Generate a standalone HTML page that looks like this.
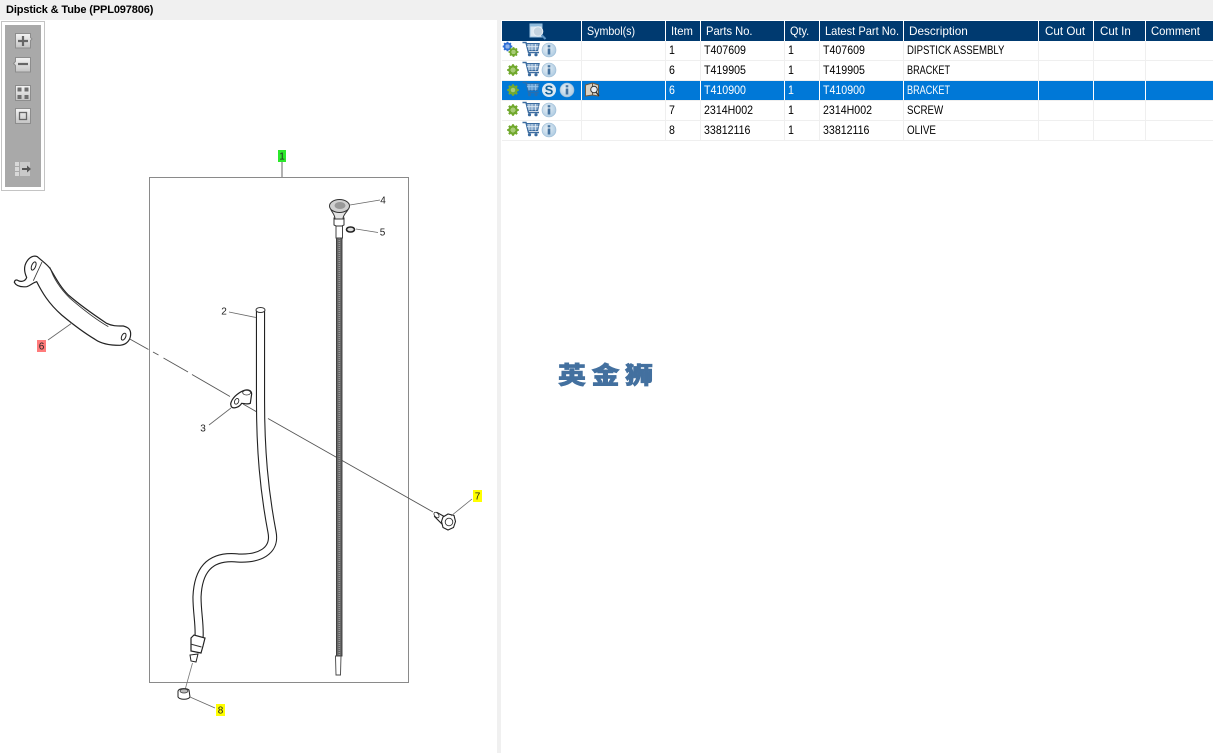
<!DOCTYPE html>
<html><head><meta charset="utf-8"><style>
html,body{margin:0;padding:0;background:#fff;width:1213px;height:753px;overflow:hidden}
body{font-family:"Liberation Sans","Noto Sans CJK SC",sans-serif;position:relative}
#top{position:absolute;left:0;top:0;width:1213px;height:20px;background:#f0f0f0}
#title{position:absolute;left:6px;top:3px;font-size:11px;line-height:14px;font-weight:bold;color:#000;white-space:nowrap;letter-spacing:-.13px}
#div{position:absolute;left:497px;top:20px;width:4px;height:733px;background:#f0f0f0}
#tb{position:absolute;left:1px;top:21px;width:36px;height:162px;border:4px solid #fff;outline:1px solid #c4c4c4;outline-offset:-1px;background:#a9a9a9}
#hd,.r{position:absolute;left:502px;width:711px}
#hd{top:21px;height:20px;background:#003a70}
.r{height:19px;border-bottom:1px solid #efefef}
.c{position:absolute;top:0;font-size:12px;white-space:nowrap;color:#000;line-height:19px;transform-origin:0 50%;transform:scaleX(.885)}
#hd .c{color:#fff;line-height:20px}
.sel{background:#0078d7}.sel .c{color:#fff}
#wm{position:absolute;left:558px;top:358px;font-size:28px;line-height:36px;font-weight:900;letter-spacing:5.5px;color:#43709f;white-space:nowrap;-webkit-text-stroke:.7px #43709f;transform-origin:0 50%;transform:scaleY(.86)}
svg{position:absolute;left:0;top:0}
.t{font:10px "Liberation Sans",sans-serif;fill:#222}
</style></head><body>
<div id="top"></div><div id="title">Dipstick &amp; Tube (PPL097806)</div>
<div id="div"></div>
<div id="tb"></div>

<div id="hd">
<span class="c" style="left:85px;transform:scaleX(.89)">Symbol(s)</span><span class="c" style="left:169px;transform:scaleX(.94)">Item</span><span class="c" style="left:204px;transform:scaleX(.93)">Parts No.</span><span class="c" style="left:288px;transform:scaleX(.91)">Qty.</span><span class="c" style="left:323px;transform:scaleX(.925)">Latest Part No.</span><span class="c" style="left:407px;transform:scaleX(.98)">Description</span><span class="c" style="left:542.500px;transform:scaleX(.97)">Cut Out</span><span class="c" style="left:597.500px;transform:scaleX(.96)">Cut In</span><span class="c" style="left:649px;transform:scaleX(.94)">Comment</span>
</div>

<div class="r" style="top:41px"><span class="c" style="left:167px">1</span><span class="c" style="left:202px">T407609</span><span class="c" style="left:286px">1</span><span class="c" style="left:321px">T407609</span><span class="c" style="left:405px;transform:scaleX(.8)">DIPSTICK ASSEMBLY</span></div>
<div class="r" style="top:61px"><span class="c" style="left:167px">6</span><span class="c" style="left:202px">T419905</span><span class="c" style="left:286px">1</span><span class="c" style="left:321px">T419905</span><span class="c" style="left:405px;transform:scaleX(.76)">BRACKET</span></div>
<div class="r sel" style="top:81px"><span class="c" style="left:167px">6</span><span class="c" style="left:202px">T410900</span><span class="c" style="left:286px">1</span><span class="c" style="left:321px">T410900</span><span class="c" style="left:405px;transform:scaleX(.76)">BRACKET</span></div>
<div class="r" style="top:101px"><span class="c" style="left:167px">7</span><span class="c" style="left:202px">2314H002</span><span class="c" style="left:286px">1</span><span class="c" style="left:321px">2314H002</span><span class="c" style="left:405px;transform:scaleX(.81)">SCREW</span></div>
<div class="r" style="top:121px"><span class="c" style="left:167px">8</span><span class="c" style="left:202px">33812116</span><span class="c" style="left:286px">1</span><span class="c" style="left:321px">33812116</span><span class="c" style="left:405px;transform:scaleX(.82)">OLIVE</span></div>

<div id="wm">英金狮</div>

<svg width="1213" height="753" viewBox="0 0 1213 753" fill="none">
<defs>
<linearGradient id="btn" x1="0" y1="0" x2="0" y2="1"><stop offset="0" stop-color="#f4f4f4"/><stop offset="1" stop-color="#c4c4c4"/></linearGradient>
<radialGradient id="inf" cx=".4" cy=".4" r=".7"><stop offset="0" stop-color="#e6eff6"/><stop offset="1" stop-color="#a9c8e0"/></radialGradient>
<g id="gear"><circle r="3.500" fill="none" stroke="#72a92e" stroke-width="2.400"/><path d="M0-5.800V-3M0 3V5.800M-5.800 0H-3M3 0H5.800M-4.100-4.100L-2.200-2.200M2.200 2.200L4.100 4.100M-4.100 4.100L-2.200 2.200M2.200-2.200L4.100-4.100" stroke="#72a92e" stroke-width="2.100"/><circle r="2.300" fill="#a9cc76"/></g>
<g id="gearb"><circle r="3" fill="none" stroke="#2f6fd6" stroke-width="2"/><path d="M0-4.800V-2.500M0 2.500V4.800M-4.800 0H-2.500M2.500 0H4.800M-3.400-3.400L-1.800-1.800M1.800 1.800L3.400 3.400M-3.400 3.400L-1.800 1.800M1.800-1.800L3.400-3.400" stroke="#2f6fd6" stroke-width="1.700"/><circle r="2" fill="#8fb4ec"/></g>
<g id="cart"><path d="M-8.500-6.500h3.500l2.500 10h10.500" stroke="#3a6b9f" stroke-width="1.400"/><path d="M-4.800-5.500h13l-1.500 7h-9.800z" fill="#86a8cb" stroke="#3a6b9f"/><path d="M-2-5v6.500M1-5v6.500M4.500-5v6.500M-4-2.300h11.500" stroke="#e2ecf5" stroke-width=".8"/><circle cx="-1.500" cy="5.700" r="1.600" fill="#3a6b9f"/><circle cx="5" cy="5.700" r="1.600" fill="#3a6b9f"/></g>
<g id="info"><circle r="7" fill="url(#inf)" stroke="#9abad4" stroke-width=".6"/><rect x="-1.300" y="-1.500" width="2.600" height="6" fill="#44729f"/><rect x="-1.300" y="-4.800" width="2.600" height="2.200" fill="#44729f"/></g>
</defs>

<!-- column separators -->
<g fill="#fff">
<rect x="581" y="21" width="1" height="20"/><rect x="665" y="21" width="1" height="20"/><rect x="700" y="21" width="1" height="20"/><rect x="784" y="21" width="1" height="20"/><rect x="819" y="21" width="1" height="20"/><rect x="903" y="21" width="1" height="20"/><rect x="1038" y="21" width="1" height="20"/><rect x="1093" y="21" width="1" height="20"/><rect x="1145" y="21" width="1" height="20"/>
<rect x="581" y="81" width="1" height="19"/><rect x="665" y="81" width="1" height="19"/><rect x="700" y="81" width="1" height="19"/><rect x="784" y="81" width="1" height="19"/><rect x="819" y="81" width="1" height="19"/><rect x="903" y="81" width="1" height="19"/><rect x="1038" y="81" width="1" height="19"/><rect x="1093" y="81" width="1" height="19"/><rect x="1145" y="81" width="1" height="19"/>
</g>
<g fill="#efefef">
<rect x="581" y="41" width="1" height="39"/><rect x="665" y="41" width="1" height="39"/><rect x="700" y="41" width="1" height="39"/><rect x="784" y="41" width="1" height="39"/><rect x="819" y="41" width="1" height="39"/><rect x="903" y="41" width="1" height="39"/><rect x="1038" y="41" width="1" height="39"/><rect x="1093" y="41" width="1" height="39"/><rect x="1145" y="41" width="1" height="39"/>
<rect x="581" y="101" width="1" height="39"/><rect x="665" y="101" width="1" height="39"/><rect x="700" y="101" width="1" height="39"/><rect x="784" y="101" width="1" height="39"/><rect x="819" y="101" width="1" height="39"/><rect x="903" y="101" width="1" height="39"/><rect x="1038" y="101" width="1" height="39"/><rect x="1093" y="101" width="1" height="39"/><rect x="1145" y="101" width="1" height="39"/>
</g>

<!-- header icon -->
<rect x="530" y="24" width="12" height="13" fill="#dce8f2" stroke="#9cc3e0"/><rect x="530" y="24" width="12" height="2.500" fill="#8fbbdc"/>
<circle cx="538" cy="31.500" r="4.800" fill="#c4d3df" stroke="#e8eff5"/><path d="M541.500 35l4 4" stroke="#5f95c4" stroke-width="2"/>

<!-- row icons -->
<use href="#gearb" x="507.500" y="46.500"/>
<use href="#gear" transform="translate(513.500 52) scale(.85)"/>
<use href="#cart" x="531" y="49"/><use href="#info" x="549" y="50"/>
<use href="#gear" x="513" y="70"/>
<use href="#cart" x="531" y="69"/><use href="#info" x="549" y="70"/>
<use href="#gear" x="513" y="90"/>
<use href="#cart" x="531" y="89" opacity=".7"/>
<circle cx="549" cy="90" r="7" fill="#dbe8f2"/>
<text x="549" y="94.500" text-anchor="middle" font-family="Liberation Sans" font-weight="bold" font-size="13" fill="#0f5f98">S</text>
<use href="#info" x="567" y="90"/>
<use href="#gear" x="513" y="110"/>
<use href="#cart" x="531" y="109"/><use href="#info" x="549" y="110"/>
<use href="#gear" x="513" y="130"/>
<use href="#cart" x="531" y="129"/><use href="#info" x="549" y="130"/>
<!-- symbol icon -->
<path d="M585.500 85l7-2 6 2v11l-6-1-7 1z" fill="#d9d2c4" stroke="#6b5a44"/><path d="M592.500 83v12" stroke="#6b5a44"/>
<circle cx="594" cy="89.500" r="3.300" fill="#e8eef4" stroke="#333"/><path d="M596 92l3 4" stroke="#333" stroke-width="1.300"/>

<!-- toolbar buttons -->
<g stroke="#8d8d8d" fill="url(#btn)">
<path d="M15.500 33.500h15v4l1.500 1.500-1.500 1.500v7.500h-15z"/>
<path d="M30.500 57.500h-15v4l-2 2 2 2v6.500h15z"/>
<rect x="15.500" y="85.500" width="15" height="15"/>
<rect x="15.500" y="108.500" width="15" height="15"/>
</g>
<path d="M18 41h10M23 36v10" stroke="#666" stroke-width="2.200"/>
<path d="M18 64h10" stroke="#666" stroke-width="2.200"/>
<g fill="#6e6e6e"><rect x="17.500" y="87.500" width="4" height="4"/><rect x="24.500" y="87.500" width="4" height="4"/><rect x="17.500" y="95" width="4" height="4"/><rect x="24.500" y="95" width="4" height="4"/></g>
<rect x="19.500" y="112.500" width="7" height="7" stroke="#666" stroke-width="1.300"/>
<g fill="#d8d8d8"><rect x="15" y="162" width="4" height="4"/><rect x="15" y="167" width="4" height="4"/><rect x="15" y="172" width="4" height="4"/></g>
<rect x="20" y="162" width="10" height="14" fill="#c9c9c9"/>
<path d="M22 169h6" stroke="#555" stroke-width="2"/><path d="M27 165.500l4 3.500-4 3.500z" fill="#555"/>

<!-- drawing frame -->
<rect x="149.500" y="177.500" width="259" height="505" stroke="#8a8a8a"/>
<rect x="278" y="150" width="8" height="12" fill="#2be82b"/>
<text class="t" x="282" y="159.500" text-anchor="middle">1</text>
<path d="M282 162v15" stroke="#666"/>

<!-- axis dashed line -->
<path d="M128 338L148.500 349.500M153 352L158.500 355M163.500 358L188 372M192 374.500L230 396.500M243 404L263 415.500M268 418.500L433 512" stroke="#555" stroke-width=".9"/>

<!-- tube -->
<path d="M260.500 310V400C260.500 450 264 490 272 532C276 552 258 559 238 558C208 555 198 572 197 597C197 613 200 625 199 638" stroke="#222" stroke-width="9.200"/>
<path d="M260.500 310V400C260.500 450 264 490 272 532C276 552 258 559 238 558C208 555 198 572 197 597C197 613 200 625 199 638" stroke="#fff" stroke-width="7"/>
<ellipse cx="260.500" cy="310" rx="4.500" ry="2.500" fill="#fff" stroke="#333"/>
<!-- fitting -->
<path d="M191 638l3-3 11 3-2 8-2 7-10-2 0-7z" fill="#fff" stroke="#222" stroke-width="1.200"/>
<path d="M190.500 644l11 3" stroke="#333"/>
<path d="M190 655l1 6 5 1 2-8z" fill="#fff" stroke="#222"/>
<path d="M192.500 663L185 690" stroke="#777" stroke-width=".8"/>
<!-- olive 8 -->
<path d="M178 691c1-3 9-3 11-1l1 7c-2 3-10 3-12 0z" fill="#fff" stroke="#222"/><ellipse cx="184" cy="691" rx="4" ry="2" fill="#bbb" stroke="#333" stroke-width=".7"/>
<path d="M190 697L215 708" stroke="#666" stroke-width=".8"/>
<rect x="216" y="704" width="9" height="12" fill="#ff0"/>
<text class="t" x="220.500" y="713.500" text-anchor="middle">8</text>

<!-- dipstick -->
<rect x="336.500" y="238" width="5.500" height="418" fill="#666" stroke="#333" stroke-width=".9"/>
<path d="M339.300 238V656" stroke="#999" stroke-width="1.600" stroke-dasharray="1 1"/>
<path d="M335.500 656h5.500l-.5 19h-4.500z" fill="#fff" stroke="#444" stroke-width=".9"/>
<path d="M336 226h6.500v12h-6.500z" fill="#fff" stroke="#444"/>
<path d="M334 218h10v7l-2 1h-6l-2-1z" fill="#fff" stroke="#333"/>
<path d="M330 207c1 5 5 7 5 12h8c0-5 5-7 6-12z" fill="#e4e4e4" stroke="#333"/>
<ellipse cx="339.500" cy="206" rx="10" ry="6.500" fill="#d0d0d0" stroke="#333"/>
<ellipse cx="340" cy="205.500" rx="5.500" ry="3.500" fill="#999"/>
<path d="M350 205L380 200" stroke="#666" stroke-width=".8"/>
<text class="t" x="383" y="203.500" text-anchor="middle">4</text>
<ellipse cx="350.500" cy="229.500" rx="4" ry="2.500" stroke="#222" stroke-width="1.600" fill="#ddd"/>
<path d="M356 229L378 232.500" stroke="#666" stroke-width=".8"/>
<text class="t" x="382.500" y="235.500" text-anchor="middle">5</text>
<text class="t" x="224" y="314.500" text-anchor="middle">2</text>
<path d="M229 312L256 317.500" stroke="#666" stroke-width=".8"/>
<text class="t" x="203" y="431.500" text-anchor="middle">3</text>
<path d="M209 425L231 408" stroke="#666" stroke-width=".8"/>

<!-- bracket 6 -->
<g transform="translate(0 240) scale(.3333)">
<path d="M43 127C48 137 60 142 80 140C92 137 98 128 110 125C125 155 145 190 185 225C215 250 255 280 285 298C305 312 330 316 360 316C382 314 392 298 392 282C392 268 385 262 370 258C350 258 335 258 320 250C290 230 240 195 205 165C180 140 165 110 150 85C140 72 125 62 112 50C100 45 88 52 80 65C72 78 72 95 80 112C78 120 68 128 55 122C50 118 44 120 43 127Z" fill="#fff" stroke="#222" stroke-width="3.600"/>
<path d="M100 122L126 66M150 82C160 115 180 145 210 175C245 205 290 240 325 260" stroke="#333" stroke-width="2.500"/>
<ellipse cx="101" cy="78" rx="6" ry="13" transform="rotate(22 101 78)" fill="#fff" stroke="#222" stroke-width="3"/>
<ellipse cx="371" cy="290" rx="6" ry="11" transform="rotate(25 371 290)" fill="#fff" stroke="#222" stroke-width="3"/>
<path d="M692 492C695 475 712 460 730 452C742 447 755 450 755 462L751 490C742 494 732 490 725 490C718 502 700 508 694 500Z" fill="#fff" stroke="#222" stroke-width="3.600"/>
<ellipse cx="740" cy="458" rx="12" ry="7" fill="#fff" stroke="#333" stroke-width="2.500"/>
<ellipse cx="710" cy="484" rx="6" ry="9" transform="rotate(25 710 484)" fill="#fff" stroke="#222" stroke-width="2.500"/>
</g>
<path d="M48 340L72 323" stroke="#666" stroke-width=".8"/>
<rect x="37" y="340" width="9" height="12" fill="#ff7b7b"/>
<text class="t" x="41.500" y="349.500" text-anchor="middle">6</text>

<!-- bolt 7 -->
<path d="M437 512.500l-2.500 4 7.500 7.500 5-6z" fill="#fff" stroke="#222" stroke-width="1.100"/>
<ellipse cx="436.500" cy="515" rx="2" ry="3.200" transform="rotate(-40 436.500 515)" fill="#fff" stroke="#333" stroke-width=".8"/>
<path d="M443 517l5-3 6 1.500 1.500 6-2 6-5.500 2.500-5-2.500-1.500-6z" fill="#fff" stroke="#222" stroke-width="1.100"/>
<circle cx="449" cy="522" r="3.800" stroke="#333" stroke-width=".9"/>
<path d="M451 516L472 499" stroke="#666" stroke-width=".8"/>
<rect x="473" y="490" width="9" height="12" fill="#ff0"/>
<text class="t" x="477.500" y="499.500" text-anchor="middle">7</text>
</svg>
</body></html>
